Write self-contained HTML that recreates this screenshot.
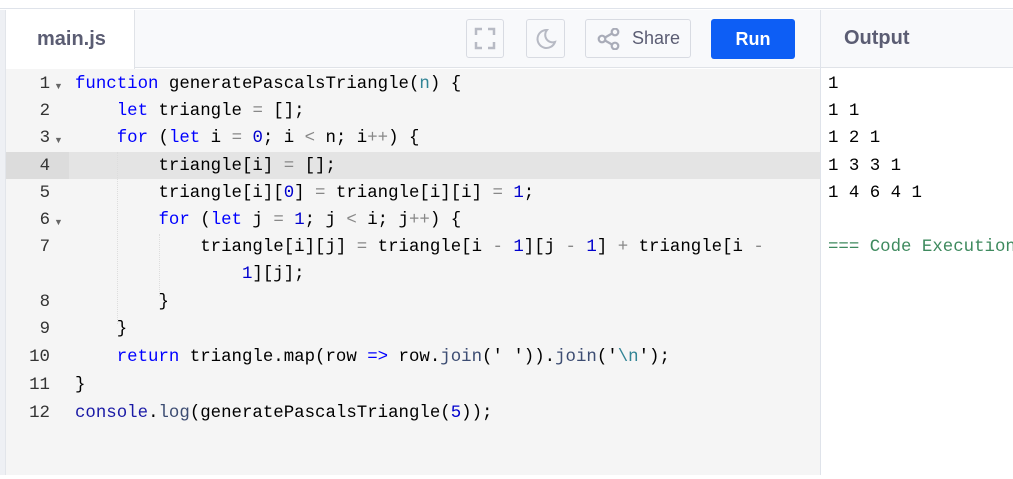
<!DOCTYPE html>
<html><head><style>
*{margin:0;padding:0;box-sizing:border-box}
body{width:1013px;height:475px;overflow:hidden;background:#fff;font-family:"Liberation Sans",sans-serif;position:relative}
.top{position:absolute;left:0;top:0;width:1013px;height:9px;background:#fff;border-bottom:1px solid #dfe3ea}
.lstrip{position:absolute;left:0;top:10px;width:6px;height:465px;background:#eef0f4;border-right:1px solid #e2e5ea}
.hdr{position:absolute;left:6px;top:10px;width:814px;height:58px;background:#f8f9fb;border-bottom:1px solid #e0e3e8}
.tab{position:absolute;left:6px;top:10px;width:129px;height:59px;background:#fff;border-right:1px solid #e0e3e8;font-size:20px;color:#5b5d73;font-weight:bold;padding:18px 0 0 31px}
.btn{position:absolute;top:19px;height:39px;border:1px solid #d8dbe2;border-radius:3px;background:#f8f9fb}
.run{position:absolute;left:711px;top:19px;width:84px;height:40px;background:#0d5ef5;border-radius:3px;color:#fff;font-weight:bold;font-size:18px;text-align:center;line-height:40px}
.code{position:absolute;left:6px;top:69px;width:814px;height:406px;background:#f5f5f5}
.out{position:absolute;left:820px;top:10px;width:193px;height:465px;background:#fff;border-left:1px solid #dfe3ea}
.outh{position:absolute;left:821px;top:10px;width:192px;height:58px;background:#f8f9fb;border-bottom:1px solid #e0e3e8;font-size:20px;color:#5b5d73;font-weight:bold;padding:17px 0 0 23px}
.ln{position:absolute;left:0;width:50px;text-align:right;font-family:"Liberation Mono",monospace;font-size:17.4px;color:#333}
.c{position:absolute;left:75px;font-family:"Liberation Mono",monospace;font-size:17.4px;color:#000;white-space:pre}
.o{position:absolute;left:828px;font-family:"Liberation Mono",monospace;font-size:17.4px;color:#000;white-space:pre}
.k{color:#0000ff}.n{color:#0000cd}.p{color:#888}.t{color:#318495}.f{color:#3c4c72}.s{color:#1a1aa6}
.fold{font-size:9px;color:#666;position:absolute;left:54px}
.w{position:absolute;left:0;top:4px;width:1013px;height:475px}
</style></head><body>
<div class="top"></div>
<div class="lstrip"></div>
<div class="hdr"></div>
<div class="tab">main.js</div>
<div class="btn" style="left:466px;width:38px">
<svg width="36" height="37" viewBox="0 0 36 37"><g fill="none" stroke="#b7bac4" stroke-width="2.5"><path d="M9 15V9h6M21 9h6v6M27 22v6h-6M15 28H9v-6"/></g></svg></div>
<div class="btn" style="left:526px;width:39px">
<svg width="37" height="37" viewBox="0 0 37 37"><path d="M20 10a9 9 0 1 0 8 12a7.5 7.5 0 0 1-8-12z" fill="none" stroke="#b7bac4" stroke-width="2"/></svg></div>
<div class="btn" style="left:585px;width:106px;font-size:18px;color:#5b5d73;line-height:37px">
<svg style="position:absolute;left:11px;top:8px" width="24" height="22" viewBox="0 0 24 22"><g fill="none" stroke="#a9acb8" stroke-width="2.2"><circle cx="5" cy="11" r="3.3"/><circle cx="18" cy="4" r="3.3"/><circle cx="18" cy="18" r="3.3"/><path d="M8 9.5l7-4M8 12.5l7 4"/></g></svg>
<span style="position:absolute;left:46px;top:0">Share</span></div>
<div class="run">Run</div>
<div class="code"></div>
<div style="position:absolute;left:6px;top:152px;width:814px;height:27px;background:#e4e4e4"></div>
<div style="position:absolute;left:6px;top:152px;width:63px;height:27px;background:#dcdcdc"></div>
<div style="position:absolute;left:117px;top:152px;height:172px;border-left:1px dotted #ddd"></div>
<div style="position:absolute;left:159px;top:234px;height:62px;border-left:1px dotted #ddd"></div>
<div class="out"></div>
<div class="outh">Output</div>
<div class="w">
<div class="ln" style="top:71px">1</div><span class="fold" style="top:77px">▼</span>
<div class="ln" style="top:98px">2</div>
<div class="ln" style="top:125px">3</div><span class="fold" style="top:131px">▼</span>
<div class="ln" style="top:153px">4</div>
<div class="ln" style="top:180px">5</div>
<div class="ln" style="top:207px">6</div><span class="fold" style="top:213px">▼</span>
<div class="ln" style="top:234px">7</div>
<div class="ln" style="top:289px">8</div>
<div class="ln" style="top:316px">9</div>
<div class="ln" style="top:344px">10</div>
<div class="ln" style="top:372px">11</div>
<div class="ln" style="top:400px">12</div>

<div class="c" style="top:71px"><span class="k">function</span> generatePascalsTriangle(<span class="t">n</span>) {</div>
<div class="c" style="top:98px">    <span class="k">let</span> triangle <span class="p">=</span> [];</div>
<div class="c" style="top:125px">    <span class="k">for</span> (<span class="k">let</span> i <span class="p">=</span> <span class="n">0</span>; i <span class="p">&lt;</span> n; i<span class="p">++</span>) {</div>
<div class="c" style="top:153px">        triangle[i] <span class="p">=</span> [];</div>
<div class="c" style="top:180px">        triangle[i][<span class="n">0</span>] <span class="p">=</span> triangle[i][i] <span class="p">=</span> <span class="n">1</span>;</div>
<div class="c" style="top:207px">        <span class="k">for</span> (<span class="k">let</span> j <span class="p">=</span> <span class="n">1</span>; j <span class="p">&lt;</span> i; j<span class="p">++</span>) {</div>
<div class="c" style="top:234px">            triangle[i][j] <span class="p">=</span> triangle[i <span class="p">-</span> <span class="n">1</span>][j <span class="p">-</span> <span class="n">1</span>] <span class="p">+</span> triangle[i <span class="p">-</span></div>
<div class="c" style="top:261px">                <span class="n">1</span>][j];</div>
<div class="c" style="top:289px">        }</div>
<div class="c" style="top:316px">    }</div>
<div class="c" style="top:344px">    <span class="k">return</span> triangle.map(row <span class="k">=&gt;</span> row.<span class="f">join</span>(' ')).<span class="f">join</span>('<span class="t">\n</span>');</div>
<div class="c" style="top:372px">}</div>
<div class="c" style="top:400px"><span class="s">console</span>.<span class="f">log</span>(generatePascalsTriangle(<span class="n">5</span>));</div>

<div class="o" style="top:71px">1</div>
<div class="o" style="top:98px">1 1</div>
<div class="o" style="top:125px">1 2 1</div>
<div class="o" style="top:153px">1 3 3 1</div>
<div class="o" style="top:180px">1 4 6 4 1</div>
<div class="o" style="top:234px;color:#3e8a5e">=== Code Execution</div>
</div>
</body></html>
